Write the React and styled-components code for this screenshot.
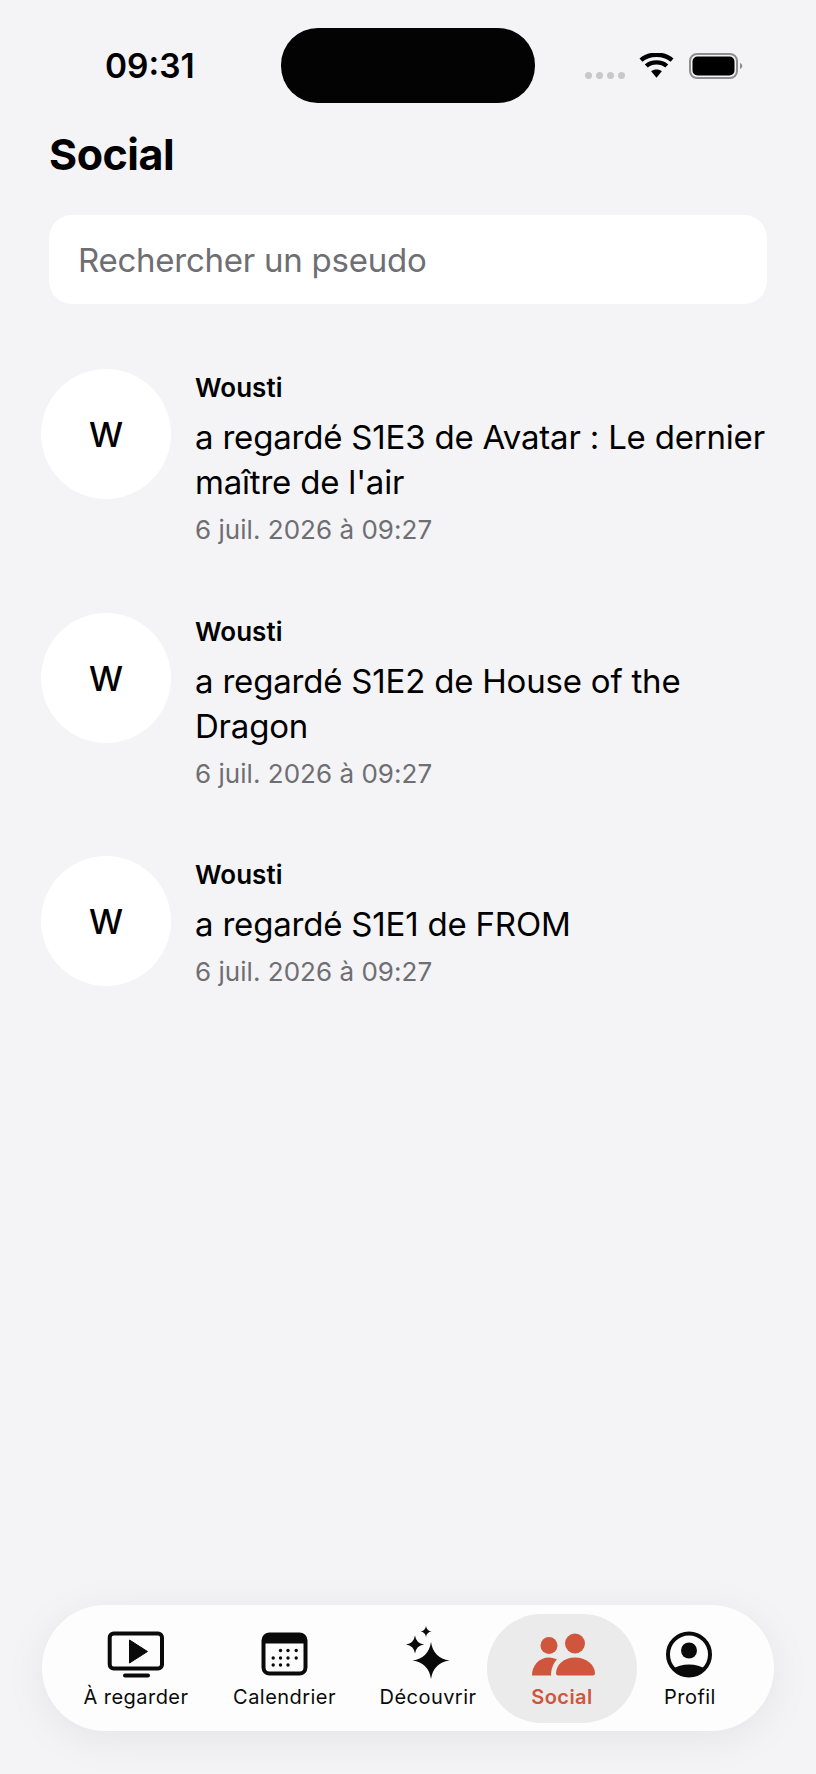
import React from 'react'
import styled, { createGlobalStyle } from 'styled-components'

const GlobalStyle = createGlobalStyle`
  html, body { margin: 0; padding: 0; background: #f4f4f6; }
  * { box-sizing: border-box; }
`

const Page = styled.div`
  width: 816px;
  height: 1774px;
  background: #f4f4f6;
  display: flex;
  flex-direction: column;
  font-family: Inter, "Liberation Sans", sans-serif;
  color: #000;
  overflow: hidden;
`

const StatusBar = styled.div`
  height: 75px;
  margin-top: 28px;
  display: flex;
  align-items: center;
`

const Time = styled.div`
  width: 281px;
  padding: 2px 0 0 105px;
  font-size: 33.5px;
  font-weight: 600;
  line-height: 1;
`

const Island = styled.div`
  width: 254px;
  height: 75px;
  border-radius: 37px;
  background: #030303;
`

const Indicators = styled.div`
  display: flex;
  align-items: center;
  margin-left: 50px;
`

const Dots = styled.div`
  display: flex;
  gap: 4px;
  margin-top: 20px;
  margin-right: 14px;
`

const Dot = styled.span`
  width: 7px;
  height: 7px;
  border-radius: 50%;
  background: #c8c8ca;
`

const BatteryIcon = styled.svg`
  margin-left: 15px;
`

const Title = styled.h1`
  margin: 25px 0 0 49px;
  font-size: 43px;
  line-height: 52px;
  font-weight: 700;
  letter-spacing: -0.5px;
`

const Search = styled.div`
  margin: 35px 49px 0;
  height: 89px;
  border-radius: 23px;
  background: #fff;
  display: flex;
  align-items: center;
  padding-left: 29px;
  font-size: 33px;
  letter-spacing: -0.25px;
  color: #6e6e73;
`

const Feed = styled.div`
  margin-top: 65px;
  padding-left: 41px;
  display: flex;
  flex-direction: column;
`

const Row = styled.div`
  display: flex;
  gap: 24px;
  height: 243.5px;
`

const Avatar = styled.div`
  width: 130px;
  height: 130px;
  flex: none;
  border-radius: 50%;
  background: #fff;
  display: flex;
  align-items: center;
  justify-content: center;
  padding-top: 1px;
  font-size: 34px;
  font-weight: 550;
`

const Body = styled.div`
  width: 590px;
  display: flex;
  flex-direction: column;
  padding-top: 1px;
`

const Name = styled.div`
  font-size: 26px;
  line-height: 36px;
  font-weight: 560;
  letter-spacing: 0.05px;
`

const Action = styled.div`
  font-size: 33px;
  line-height: 45px;
  letter-spacing: -0.2px;
  margin-top: 9px;
`

const When = styled.div`
  font-size: 26px;
  line-height: 36px;
  letter-spacing: 0.03px;
  margin-top: 7px;
  color: #6e6e73;
`

const TabBar = styled.nav`
  margin: auto 42px 43px;
  height: 126px;
  border-radius: 63px;
  background: #fdfdfd;
  box-shadow: 0 8px 44px rgba(0, 0, 0, 0.065);
  display: flex;
  align-items: center;
  padding-left: 30px;
`

const Tab = styled.div`
  width: ${p => p.$w}px;
  height: 109px;
  border-radius: 55px;
  background: ${p => (p.$active ? '#ebebeb' : 'transparent')};
  color: ${p => (p.$active ? '#cf563d' : '#0a0a0a')};
  display: flex;
  flex-direction: column;
  align-items: center;
`

const TabIcon = styled.svg`
  width: 64px;
  height: 52px;
  margin-top: 16px;
  flex: none;
  overflow: visible;
`

const TabLabel = styled.span`
  font-size: 20px;
  line-height: 24px;
  font-weight: ${p => (p.$active ? 570 : 435)};
  letter-spacing: 0.45px;
  margin-top: 3px;
  white-space: nowrap;
`

const star = (cx, cy, r) => {
  const k = r * 0.13
  return `M${cx} ${cy - r}Q${cx + k} ${cy - k} ${cx + r} ${cy}Q${cx + k} ${cy + k} ${cx} ${cy + r}Q${cx - k} ${cy + k} ${cx - r} ${cy}Q${cx - k} ${cy - k} ${cx} ${cy - r}Z`
}

const calendarDots = [
  [27.5, 20.5], [35, 20.5], [43.2, 20.5],
  [20.2, 28], [27.5, 28], [35, 28], [43.2, 28],
  [20.2, 35], [27.5, 35], [35, 35],
]

const tabs = [
  {
    label: 'À regarder',
    w: 128,
    icon: (
      <>
        <rect x="5.700" y="3.500" width="52.300" height="35" rx="4" fill="none" stroke="currentColor" strokeWidth="4" />
        <path d="M25.500 10L43.500 21.500L25.500 33Z" fill="currentColor" stroke="currentColor" strokeWidth="1" strokeLinejoin="round" />
        <rect x="19" y="43.500" width="27" height="4" rx="2" fill="currentColor" />
      </>
    ),
  },
  {
    label: 'Calendrier',
    w: 169,
    icon: (
      <>
        <rect x="10.500" y="4.500" width="42" height="39" rx="6" fill="none" stroke="currentColor" strokeWidth="4" />
        <path d="M10 10a6 6 0 0 1 6-6h31a6 6 0 0 1 6 6v3.500H10Z" fill="currentColor" />
        {calendarDots.map(([x, y]) => (
          <circle key={`${x}-${y}`} cx={x} cy={y} r="1.700" fill="currentColor" />
        ))}
      </>
    ),
  },
  {
    label: 'Découvrir',
    w: 118,
    icon: (
      <>
        <path d={star(35, 30.5, 18.5)} fill="currentColor" />
        <path d={star(19, 14.5, 9)} fill="currentColor" />
        <path d={star(30, 1.5, 5.5)} fill="currentColor" />
      </>
    ),
  },
  {
    label: 'Social',
    w: 150,
    active: true,
    icon: (
      <>
        <circle cx="19" cy="15.500" r="8.500" fill="currentColor" />
        <circle cx="45" cy="13.500" r="10" fill="currentColor" />
        <path d="M2 45.500C2 35.500 9 27.500 19 27.500C22 27.500 25 28.500 27 29.500C23 33.500 21 39.500 21 45.500Z" fill="currentColor" />
        <path d="M26 43.500C26 34.500 34 27.500 45 27.500C56 27.500 65 34.500 65 43.500C65 44.500 64 45.500 63 45.500H28C27 45.500 26 44.500 26 43.500Z" fill="currentColor" />
      </>
    ),
  },
  {
    label: 'Profil',
    w: 106,
    icon: (
      <>
        <clipPath id="profil-clip">
          <circle cx="31" cy="24.500" r="21" />
        </clipPath>
        <circle cx="31" cy="24.500" r="21" fill="none" stroke="currentColor" strokeWidth="4" />
        <circle cx="31" cy="20.500" r="8" fill="currentColor" />
        <ellipse cx="31" cy="49.500" rx="24" ry="15" fill="currentColor" clipPath="url(#profil-clip)" />
      </>
    ),
  },
]

const activity = [
  'a regardé S1E3 de Avatar : Le dernier maître de l\'air',
  'a regardé S1E2 de House of the Dragon',
  'a regardé S1E1 de FROM',
]

const App = () => {
  return (
    <Page>
      <GlobalStyle />
      <StatusBar>
        <Time>09:31</Time>
        <Island />
        <Indicators>
          <Dots>
            <Dot /><Dot /><Dot /><Dot />
          </Dots>
          <svg width="35" height="26" viewBox="0 0 36 26">
            <path d="M18 25L12.5 18.5C15.5 16 20.5 16 23.5 18.5Z" fill="#000" />
            <path d="M7.500 13C13 8 23 8 28.500 13" fill="none" stroke="#000" strokeWidth="4.500" />
            <path d="M2 7C10.500 -0.500 25.500 -0.500 34 7" fill="none" stroke="#000" strokeWidth="4.500" />
          </svg>
          <BatteryIcon width="56" height="26" viewBox="0 0 56 26">
            <rect x="1" y="1" width="47" height="24" rx="7" fill="none" stroke="#8e8e90" strokeWidth="2" />
            <rect x="3.500" y="3.500" width="42" height="19" rx="5" fill="#000" />
            <path d="M51 10C54 11 54 15 51 16Z" fill="#8e8e90" />
          </BatteryIcon>
        </Indicators>
      </StatusBar>
      <Title>Social</Title>
      <Search>Rechercher un pseudo</Search>
      <Feed>
        {activity.map(text => (
          <Row key={text}>
            <Avatar>W</Avatar>
            <Body>
              <Name>Wousti</Name>
              <Action>{text}</Action>
              <When>6 juil. 2026 à 09:27</When>
            </Body>
          </Row>
        ))}
      </Feed>
      <TabBar>
        {tabs.map(t => (
          <Tab key={t.label} $w={t.w} $active={t.active}>
            <TabIcon viewBox="0 0 64 52">{t.icon}</TabIcon>
            <TabLabel $active={t.active}>{t.label}</TabLabel>
          </Tab>
        ))}
      </TabBar>
    </Page>
  )
}

export default App
